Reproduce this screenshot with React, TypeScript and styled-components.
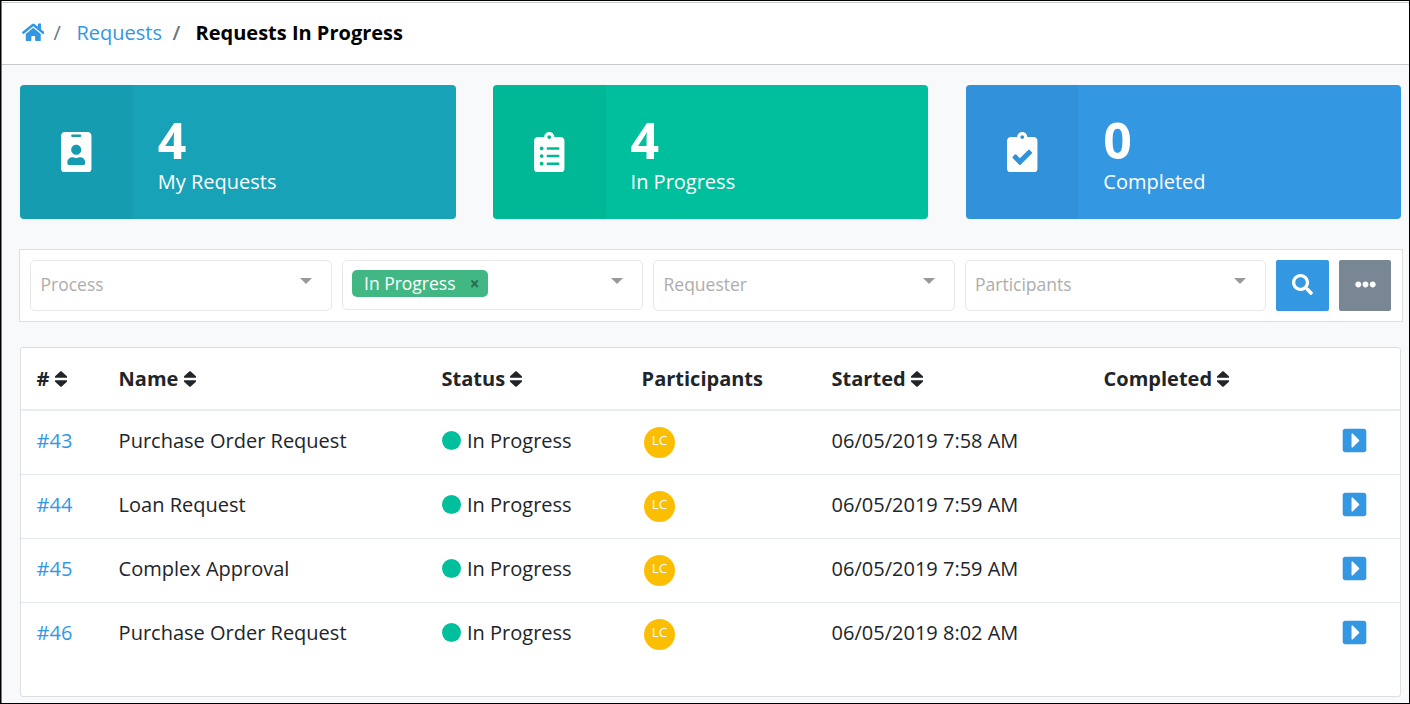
import React from "react";
import styled, { createGlobalStyle } from "styled-components";
import {
  FaCaretSquareRight,
  FaClipboardCheck,
  FaClipboardList,
  FaEllipsisH,
  FaHome,
  FaIdBadge,
  FaSearch,
  FaSort,
} from "react-icons/fa";

const GlobalStyle = createGlobalStyle`
  *, *::before, *::after { box-sizing: border-box; }
  body { margin: 0; font-family: "Open Sans", sans-serif; font-size: 20px; color: #212529; }
  svg { display: block; flex: none; }
`;

const Frame = styled.div`
  width: 1410px;
  height: 704px;
  overflow: hidden;
  border: 1px solid #000;
  background: #f7f9fb;
`;

const Page = styled.div`
  height: 702px;
  border-left: 1px solid #3c8dcb;
`;

const Header = styled.header`
  height: 64px;
  border-top: 1px solid #fff;
  border-bottom: 1px solid #c8cbce;
  background: #fff;
`;

const Breadcrumb = styled.nav`
  display: flex;
  align-items: center;
  height: 62px;
  padding: 0 0 2px 19.5px;
  border-top: 1px solid #c8cbce;
  line-height: 30px;
  white-space: nowrap;
`;

const HomeLink = styled.a`
  width: 32px;
  color: #3397e1;
`;

const Separator = styled.span<{ $bold?: boolean; $width: number }>`
  width: ${(p) => p.$width}px;
  color: #6c757d;
  font-weight: ${(p) => (p.$bold ? 600 : 400)};
`;

const CrumbLink = styled.a`
  width: 96px;
  color: #3397e1;
`;

const Current = styled.span`
  color: #000;
  font-weight: 700;
`;

const Cards = styled.section`
  display: grid;
  grid-template-columns: repeat(3, 1fr);
  column-gap: 37.25px;
  margin: 20px 8px 0 18px;
`;

const Card = styled.article<{ $color: string }>`
  display: flex;
  height: 134px;
  overflow: hidden;
  border-radius: 4px;
  background: ${(p) => p.$color};
  color: #fff;
`;

const CardIcon = styled.div`
  display: flex;
  align-items: center;
  justify-content: center;
  width: 112.8px;
  padding-left: 0.5px;
  background: rgba(0, 0, 0, 0.035);
`;

const CardBody = styled.div`
  padding: 25px 0 0 25px;
`;

const Count = styled.div`
  font-size: 50px;
  font-weight: 700;
  line-height: 60px;
`;

const CardLabel = styled.div`
  margin-top: -3px;
  line-height: 30px;
`;

const Filters = styled.section`
  display: flex;
  gap: 10px;
  height: 73px;
  margin: 30px 6px 0 17px;
  padding: 10px;
  padding-right: 11px;
  border: 1px solid #dcdfe2;
  background: #fff;
`;

const Select = styled.div<{ $height?: number }>`
  display: flex;
  flex: 1;
  justify-content: space-between;
  height: ${(p) => p.$height ?? 51}px;
  padding: 9px 19px 0 9.5px;
  border: 1px solid #e8e8e8;
  border-radius: 5px;
  background: #fff;
`;

const Placeholder = styled.span`
  color: #adadad;
  font-size: 17.5px;
  line-height: 29px;
`;

const Arrow = styled.span`
  width: 0;
  height: 0;
  margin-top: 8px;
  border: solid transparent;
  border-width: 6px 6.5px 0;
  border-top-color: #999;
`;

const Tag = styled.span`
  display: flex;
  justify-content: space-between;
  width: 136px;
  height: 27px;
  margin-left: -0.5px;
  padding: 0 8px 0 12.5px;
  border-radius: 5px;
  background: #41b883;
  color: #fff;
  font-size: 17.5px;
  line-height: 27px;
`;

const TagClose = styled.span`
  color: #266d4d;
  font-size: 17px;
  font-weight: 700;
`;

const Button = styled.button<{ $color: string; $width: number }>`
  display: flex;
  align-items: center;
  justify-content: center;
  width: ${(p) => p.$width}px;
  height: 51px;
  padding: 0 0 2px;
  border: 0;
  border-radius: 2px;
  background: ${(p) => p.$color};
  color: #fff;
`;

const TablePanel = styled.section`
  height: 350px;
  margin: 25px 8px 0 18px;
  border: 1px solid #dcdfe2;
  border-radius: 3px;
  background: #fff;
`;

const Row = styled.div`
  display: grid;
  grid-template-columns: 82px 323px 200px 190px 272px 237.5px 1fr;
  align-items: center;
  height: 64px;
  padding: 0 0 4px 15.6px;
  border-bottom: 1px solid #e5e9ed;
  line-height: 30px;
  white-space: nowrap;

  &:last-child { border-bottom: 0; height: 63px; }
`;

const HeadRow = styled(Row)`
  height: 63px;
  padding-bottom: 0;
  border-bottom: 2px solid #e8edf1;
  font-weight: 700;
`;

const HeadCell = styled.div`
  display: flex;
  align-items: center;
  gap: 5.2px;

  svg { width: 12px; }
`;

const IdLink = styled.a`
  color: #3397e1;
`;

const Status = styled.div`
  display: flex;
  align-items: center;
  gap: 6.4px;
`;

const Dot = styled.i`
  width: 19px;
  height: 19px;
  border-radius: 50%;
  background: #00bf9c;
`;

const Avatar = styled.div`
  width: 31px;
  height: 31px;
  margin: 3px 0 0 2.4px;
  border-radius: 50%;
  background: #fbbe02;
  color: #fff;
  font-size: 13.5px;
  line-height: 27px;
  text-align: center;
`;

const OpenLink = styled.a`
  color: #3397e1;
`;

const cards = [
  { color: "#17a2b8", icon: FaIdBadge, count: 4, label: "My Requests" },
  { color: "#00bf9c", icon: FaClipboardList, count: 4, label: "In Progress" },
  { color: "#3397e1", icon: FaClipboardCheck, count: 0, label: "Completed" },
];

const columns = [
  { label: "#", sortable: true },
  { label: "Name", sortable: true },
  { label: "Status", sortable: true },
  { label: "Participants", sortable: false },
  { label: "Started", sortable: true },
  { label: "Completed", sortable: true },
];

const requests = [
  { id: 43, name: "Purchase Order Request", started: "06/05/2019 7:58 AM" },
  { id: 44, name: "Loan Request", started: "06/05/2019 7:59 AM" },
  { id: 45, name: "Complex Approval", started: "06/05/2019 7:59 AM" },
  { id: 46, name: "Purchase Order Request", started: "06/05/2019 8:02 AM" },
];

function FilterSelect({ label }: { label: string }) {
  return (
    <Select>
      <Placeholder>{label}</Placeholder>
      <Arrow />
    </Select>
  );
}

export default function App() {
  return (
    <Frame>
      <GlobalStyle />
      <Page>
        <Header>
          <Breadcrumb>
            <HomeLink><FaHome size={22.5} /></HomeLink>
            <Separator $width={23}>/</Separator>
            <CrumbLink>Requests</CrumbLink>
            <Separator $bold $width={23}>/</Separator>
            <Current>Requests In Progress</Current>
          </Breadcrumb>
        </Header>
        <Cards>
          {cards.map(({ color, icon: Icon, count, label }) => (
            <Card key={label} $color={color}>
              <CardIcon><Icon size={40.5} /></CardIcon>
              <CardBody>
                <Count>{count}</Count>
                <CardLabel>{label}</CardLabel>
              </CardBody>
            </Card>
          ))}
        </Cards>
        <Filters>
          <FilterSelect label="Process" />
          <Select $height={50}>
            <Tag>In Progress<TagClose>×</TagClose></Tag>
            <Arrow />
          </Select>
          <FilterSelect label="Requester" />
          <FilterSelect label="Participants" />
          <Button $color="#3397e1" $width={53}><FaSearch size={21} /></Button>
          <Button $color="#788793" $width={52}><FaEllipsisH size={21} /></Button>
        </Filters>
        <TablePanel>
          <HeadRow>
            {columns.map(({ label, sortable }) => (
              <HeadCell key={label}>
                {label}
                {sortable && <FaSort size={20} viewBox="22 0 276 512" preserveAspectRatio="none" />}
              </HeadCell>
            ))}
          </HeadRow>
          {requests.map((request) => (
            <Row key={request.id}>
              <IdLink>#{request.id}</IdLink>
              <span>{request.name}</span>
              <Status><Dot />In Progress</Status>
              <Avatar>LC</Avatar>
              <span>{request.started}</span>
              <span />
              <OpenLink><FaCaretSquareRight size={27} /></OpenLink>
            </Row>
          ))}
        </TablePanel>
      </Page>
    </Frame>
  );
}
